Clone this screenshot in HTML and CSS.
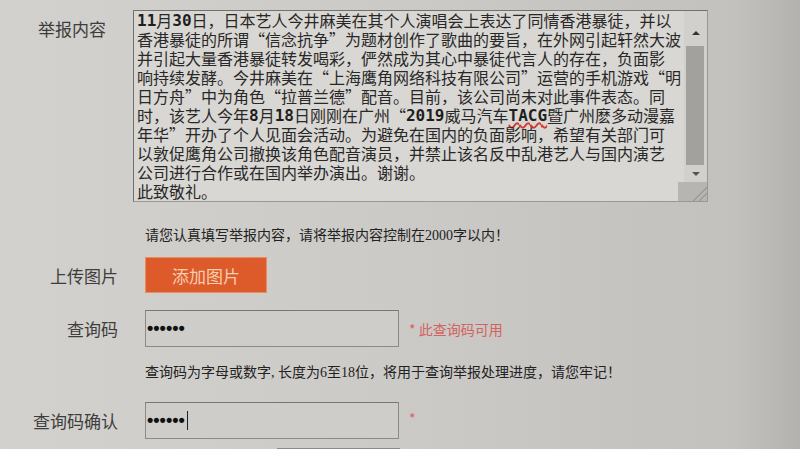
FILE: index.html
```html
<!DOCTYPE html>
<html lang="zh-CN">
<head>
  <meta charset="UTF-8">
  <meta name="viewport" content="width=device-width, initial-scale=1.0">
  <title>举报</title>
  <link rel="stylesheet" href="styles.css">
</head>
<body>

  <!-- Report Form -->
  <div class="form">

    <div class="row row-content">
      <label class="label">举报内容</label>
      <div class="textbox">
        <div class="textbox-text">
          <div class="line"><b class="num">11</b>月<b class="num">30</b>日，日本艺人今井麻美在其个人演唱会上表达了同情香港暴徒，并以</div>
          <div class="line">香港暴徒的所谓“信念抗争”为题材创作了歌曲的要旨，在外网引起轩然大波</div>
          <div class="line">并引起大量香港暴徒转发喝彩，俨然成为其心中暴徒代言人的存在，负面影</div>
          <div class="line">响持续发酵。今井麻美在“上海鹰角网络科技有限公司”运营的手机游戏“明</div>
          <div class="line">日方舟”中为角色“拉普兰德”配音。目前，该公司尚未对此事件表态。同</div>
          <div class="line">时，该艺人今年<b class="num">8</b>月<b class="num">18</b>日刚刚在广州“<b class="num">2019</b>威马汽车<b class="num typo">TACG</b>暨广州麽多动漫嘉</div>
          <div class="line">年华”开办了个人见面会活动。为避免在国内的负面影响，希望有关部门可</div>
          <div class="line">以敦促鹰角公司撤换该角色配音演员，并禁止该名反中乱港艺人与国内演艺</div>
          <div class="line">公司进行合作或在国内举办演出。谢谢。</div>
          <div class="line">此致敬礼。</div>
        </div>
        <div class="scrollbar">
          <span class="sb-btn sb-up"><i class="arrow-up"></i></span>
          <span class="sb-thumb"></span>
          <span class="sb-btn sb-down"><i class="arrow-down"></i></span>
          <span class="grip"></span>
        </div>
      </div>
    </div>

    <p class="hint">请您认真填写举报内容，请将举报内容控制在2000字以内！</p>

    <div class="row row-upload">
      <label class="label">上传图片</label>
      <button class="btn-add">添加图片</button>
    </div>

    <div class="row row-code">
      <label class="label">查询码</label>
      <div class="input"><span class="dots">••••••</span></div>
      <span class="note">* 此查询码可用</span>
    </div>

    <p class="hint">查询码为字母或数字, 长度为6至18位，将用于查询举报处理进度，请您牢记！</p>

    <div class="row row-confirm">
      <label class="label">查询码确认</label>
      <div class="input"><span class="dots">••••••</span><span class="caret"></span></div>
      <span class="note">*</span>
    </div>

    <div class="row row-next">
      <div class="next-box"></div>
    </div>

  </div>

</body>
</html>
```

FILE: styles.css
```css
/* General Page Styling */
html, body {
  height: 100%;
}

body {
  margin: 0;
  overflow: hidden;
  font-family: 'Noto Sans CJK SC', sans-serif;
  color: #2e2e2e;
  background: linear-gradient(90deg, #d3d1cd 0%, #cdcbc7 45%, #c3c1bd 92%, #b4b2ae 100%);
}

.form {
  padding-top: 10px;
}

/* Rows */
.row {
  display: flex;
  align-items: center;
}

.label {
  width: 118px;
  margin-right: 27px;
  text-align: right;
  font-size: 17px;
  color: #3d3d3d;
  flex-shrink: 0;
}

.row-content {
  align-items: flex-start;
}

.row-content .label {
  width: 106px;
  margin-top: 6px;
}

/* Fake textarea */
.textbox {
  display: flex;
  width: 573px;
  height: 190px;
  border: 1px solid #707070;
  border-right-color: #9a9894;
  border-bottom-color: #9a9894;
  background-color: #d9d7d3;
}

.textbox-text {
  flex: 1;
  padding: 0 0 0 3px;
  font-size: 16px;
  color: #282828;
  overflow: hidden;
  text-spacing-trim: space-all;
}

.line {
  height: 19px;
  line-height: 19px;
  white-space: nowrap;
}

.num {
  font-family: 'DejaVu Sans Mono', monospace;
  font-weight: bold;
  line-height: 19px;
  vertical-align: top;
  color: #1e1e1e;
}

.typo {
  text-decoration-line: underline;
  text-decoration-style: wavy;
  text-decoration-color: #d23a33;
  text-decoration-thickness: 1.5px;
  text-underline-offset: 1px;
}

.scrollbar {
  width: 23px;
  display: flex;
  flex-direction: column;
  background-color: #d2d0cc;
}

.sb-btn {
  display: flex;
  justify-content: center;
}

.sb-up {
  height: 29px;
  align-items: flex-end;
}

.sb-down {
  height: 17px;
  align-items: center;
}

.arrow-up {
  border-left: 4px solid transparent;
  border-right: 4px solid transparent;
  border-bottom: 4px solid #333;
  margin-bottom: 5px;
}

.arrow-down {
  border-left: 4px solid transparent;
  border-right: 4px solid transparent;
  border-top: 4px solid #555;
}

.sb-thumb {
  height: 119px;
  margin: 6px 3px 0 2px;
  background-color: #a3a19d;
}

.grip {
  height: 19px;
  margin-left: -6px;
  background: linear-gradient(135deg, #b7b5b1 0%, #b7b5b1 70%, #8e8c88 71%, #b7b5b1 74%, #b7b5b1 82%, #8e8c88 83%, #b7b5b1 86%);
}

/* Hints */
.hint {
  margin: 24px 0 0 145px;
  font-family: 'Liberation Serif', 'Noto Sans CJK SC', serif;
  font-size: 14px;
  line-height: 20px;
  color: #222;
}

/* Upload button */
.row-upload {
  margin-top: 11px;
}

.btn-add {
  width: 122px;
  height: 36px;
  border: 1px solid #e98d62;
  background-color: #dd5a2b;
  color: #f7cfae;
  font-family: 'Noto Sans CJK SC', sans-serif;
  font-size: 17px;
  padding: 0;
  cursor: pointer;
}

/* Inputs */
.input {
  width: 251px;
  height: 35px;
  display: flex;
  align-items: center;
  border: 1px solid #8a8a8a;
  border-top-color: #777;
  background-color: #cfcdc9;
  padding-left: 1px;
}

.dots {
  font-family: 'Liberation Sans', sans-serif;
  font-size: 18px;
  font-weight: bold;
  color: #111;
}

.caret {
  width: 1px;
  height: 19px;
  margin-left: 2px;
  background-color: #222;
}

.note {
  margin-left: 10px;
  font-size: 14px;
  color: #d4625f;
}

.row-code {
  margin-top: 17px;
}

.row-code + .hint {
  margin-top: 16px;
}

.row-confirm {
  margin-top: 19px;
}

.row-confirm .note {
  margin-top: -6px;
}

/* Next field (cut off) */
.row-next {
  margin-top: 9px;
}

.next-box {
  width: 121px;
  height: 30px;
  margin-left: 277px;
  border: 1px solid #8a8a8a;
  background-color: #cfcdc9;
}
```
